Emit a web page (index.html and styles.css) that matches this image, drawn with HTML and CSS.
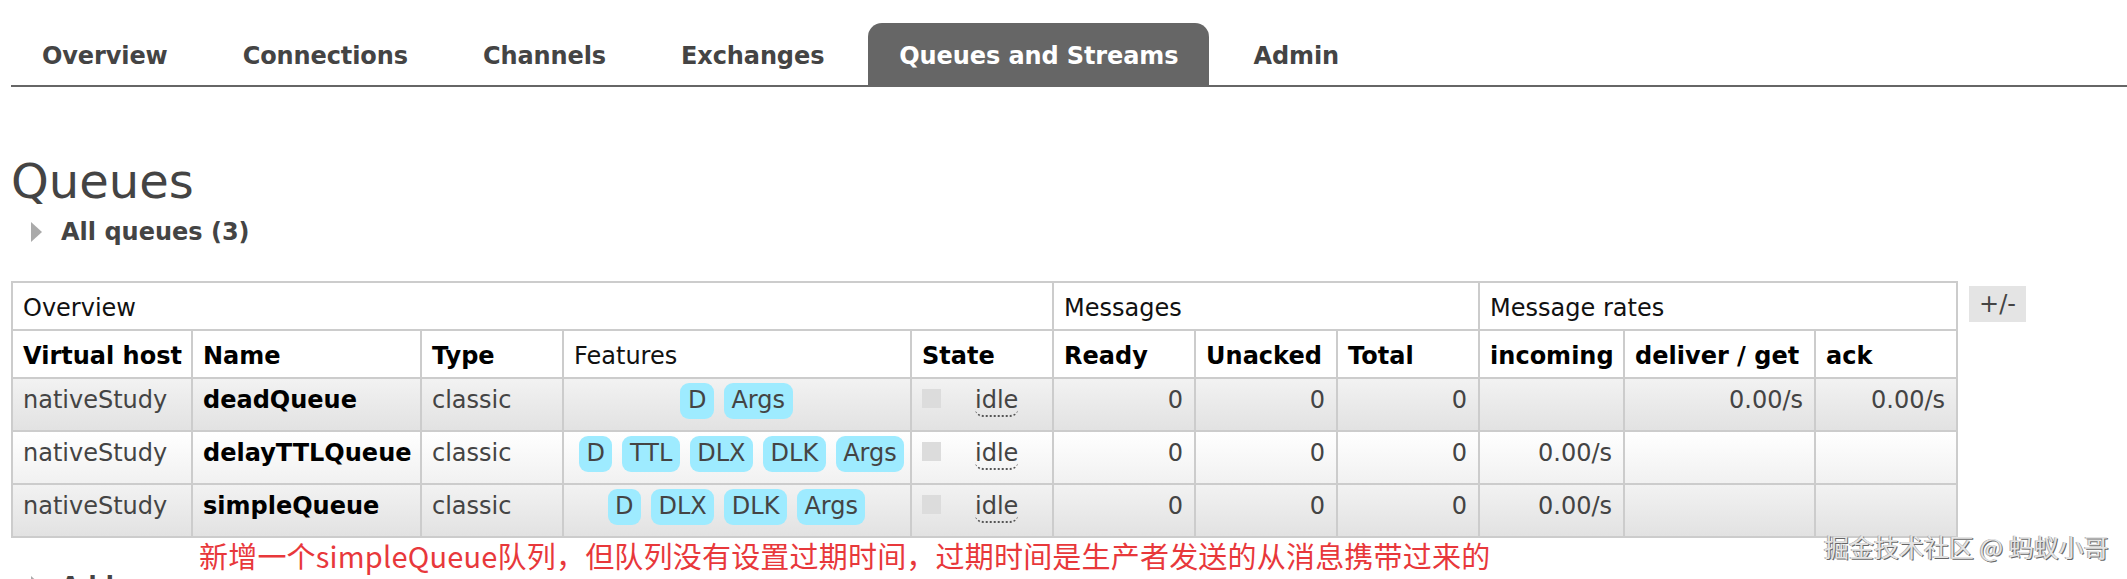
FILE: index.html
```html
<!DOCTYPE html>
<html>
<head>
    <title>RabbitMQ Management</title>
    <link rel="stylesheet" href="styles.css">
</head>
<body>
    <ul id="tabs">
        <li><a href="#/">Overview</a></li>
        <li><a href="#/connections">Connections</a></li>
        <li><a href="#/channels">Channels</a></li>
        <li><a href="#/exchanges">Exchanges</a></li>
        <li><a href="#/queues" class="selected">Queues and Streams</a></li>
        <li><a href="#/users">Admin</a></li>
    </ul>

    <div id="main">
        <h1>Queues</h1>

        <div class="section">
            <h2><svg class="arrow" viewBox="0 0 11 20"><polygon points="0,0 11,10 0,20" fill="#aaa"/></svg>All queues (3)</h2>
            <div class="list-wrap">
                <table class="list">
                    <colgroup>
                        <col class="w-vhost"><col class="w-name"><col class="w-type"><col class="w-features"><col class="w-state">
                        <col class="w-num"><col class="w-num"><col class="w-num">
                        <col class="w-incoming"><col class="w-deliver"><col class="w-num">
                    </colgroup>
                    <thead>
                        <tr class="group">
                            <th colspan="5">Overview</th>
                            <th colspan="3">Messages</th>
                            <th colspan="3">Message rates</th>
                        </tr>
                        <tr>
                            <th>Virtual host</th>
                            <th>Name</th>
                            <th>Type</th>
                            <th class="plain">Features</th>
                            <th>State</th>
                            <th>Ready</th>
                            <th>Unacked</th>
                            <th>Total</th>
                            <th>incoming</th>
                            <th>deliver / get</th>
                            <th>ack</th>
                        </tr>
                    </thead>
                    <tbody>
                        <tr class="alt1">
                            <td>nativeStudy</td>
                            <td class="name">deadQueue</td>
                            <td>classic</td>
                            <td class="c"><abbr class="feature">D</abbr><abbr class="feature">Args</abbr></td>
                            <td><span class="state-box"></span><abbr class="state">idle</abbr></td>
                            <td class="r">0</td>
                            <td class="r">0</td>
                            <td class="r">0</td>
                            <td class="r"></td>
                            <td class="r">0.00/s</td>
                            <td class="r">0.00/s</td>
                        </tr>
                        <tr class="alt2">
                            <td>nativeStudy</td>
                            <td class="name">delayTTLQueue</td>
                            <td>classic</td>
                            <td class="c"><abbr class="feature">D</abbr><abbr class="feature">TTL</abbr><abbr class="feature">DLX</abbr><abbr class="feature">DLK</abbr><abbr class="feature">Args</abbr></td>
                            <td><span class="state-box"></span><abbr class="state">idle</abbr></td>
                            <td class="r">0</td>
                            <td class="r">0</td>
                            <td class="r">0</td>
                            <td class="r">0.00/s</td>
                            <td class="r"></td>
                            <td class="r"></td>
                        </tr>
                        <tr class="alt1">
                            <td>nativeStudy</td>
                            <td class="name">simpleQueue</td>
                            <td>classic</td>
                            <td class="c"><abbr class="feature">D</abbr><abbr class="feature">DLX</abbr><abbr class="feature">DLK</abbr><abbr class="feature">Args</abbr></td>
                            <td><span class="state-box"></span><abbr class="state">idle</abbr></td>
                            <td class="r">0</td>
                            <td class="r">0</td>
                            <td class="r">0</td>
                            <td class="r">0.00/s</td>
                            <td class="r"></td>
                            <td class="r"></td>
                        </tr>
                    </tbody>
                </table>
                <span class="toggle">+/-</span>
            </div>
        </div>

        <div class="section next">
            <h2><svg class="arrow" viewBox="0 0 11 20"><polygon points="0,0 11,10 0,20" fill="#aaa"/></svg>Add a new queue</h2>
        </div>
    </div>

    <p class="note">新增一个simpleQueue队列，但队列没有设置过期时间，过期时间是生产者发送的从消息携带过来的</p>
    <div class="watermark">掘金技术社区 @ 蚂蚁小哥</div>
</body>
</html>
```

FILE: styles.css
```css
body {
    margin: 0 0 0 11px;
    font-family: "DejaVu Sans", Verdana, sans-serif;
    font-size: 24px;
    line-height: 28px;
    color: #444;
    background: #fff;
    overflow: hidden;
}

/* tabs */
#tabs {
    display: flex;
    list-style: none;
    margin: 23px 0 0;
    padding: 0;
    border-bottom: 2px solid #666;
}
#tabs li a {
    display: block;
    padding: 19px 31px 15px;
    margin-right: 13px;
    font-weight: bold;
    letter-spacing: -0.1px;
    color: #444;
    text-decoration: none;
}
#tabs li a.selected {
    background: #666;
    color: #fff;
    border-radius: 14px 14px 0 0;
}

h1 {
    margin: 66px 0 0;
    font-size: 48px;
    line-height: 56px;
    font-weight: normal;
    color: #444;
}
h2 {
    display: flex;
    align-items: center;
    margin: 9px 0 0;
    font-size: 24px;
    line-height: 28px;
    font-weight: bold;
    color: #444;
}
.arrow {
    width: 11px;
    height: 20px;
    margin: 0 19px 0 20px;
}
.next h2 {
    margin-top: 34px;
}

/* queue list */
.list-wrap {
    display: flex;
    align-items: flex-start;
    gap: 11px;
    margin-top: 35px;
}
table.list {
    border-collapse: collapse;
    table-layout: fixed;
    width: 1946px;
}
.w-vhost { width: 180px; }
.w-name { width: 229px; }
.w-type { width: 142px; }
.w-features { width: 348px; }
.w-state { width: 142px; }
.w-num { width: 142px; }
.w-incoming { width: 145px; }
.w-deliver { width: 191px; }

table.list th,
table.list td {
    border: 2px solid #ccc;
    padding: 11px 11px 7px 10px;
    text-align: left;
    white-space: nowrap;
    overflow: hidden;
}
table.list th {
    color: #000;
    font-weight: bold;
    background: #fff;
}
table.list tr.group th,
table.list th.plain {
    font-weight: normal;
    color: #111;
}
table.list td {
    padding: 4px 11px 11px 10px;
    vertical-align: baseline;
}
table.list td.name {
    font-weight: bold;
    color: #000;
}
table.list td.r {
    text-align: right;
}
table.list td.c {
    text-align: center;
}
tr.alt1 td {
    background: linear-gradient(#f2f2f2, #e2e2e2);
}
tr.alt2 td {
    background: linear-gradient(#fff, #f1f1f1);
}

.feature {
    display: inline-block;
    margin: 0 5px;
    padding: 3px 7.5px 5px;
    background: #9eebff;
    border-radius: 9px;
    text-decoration: none;
    color: #444;
}
.state-box {
    display: inline-block;
    width: 19px;
    height: 19px;
    margin-right: 34px;
    background: #dcdcdc;
}
.state {
    text-decoration: none;
    border-bottom: 2px dotted #555;
    border-radius: 0 0 8px 8px;
    padding-bottom: 1px;
}

.toggle {
    margin-top: 5px;
    padding: 4px 10px;
    background: #e4e4e4;
    color: #444;
}

/* annotation overlays */
.note {
    position: absolute;
    left: 199px;
    top: 541px;
    margin: 0;
    font-family: "Noto Sans CJK SC", sans-serif;
    font-size: 29px;
    line-height: 29px;
    letter-spacing: 0.2px;
    color: #e8383b;
}
.watermark {
    position: absolute;
    left: 1824px;
    top: 534px;
    font-family: "Noto Sans CJK SC", sans-serif;
    font-size: 25px;
    line-height: 25px;
    color: #e4e4e4;
    text-shadow: 1px 1px 0 #666, -1px 0 0 #aaa;
}
```
